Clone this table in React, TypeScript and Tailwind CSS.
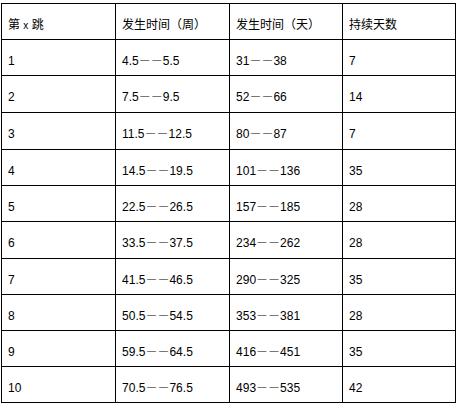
import React from 'react';

// header + 10 rows of leap data
const header = ['第 x 跳', '发生时间（周）', '发生时间（天）', '持续天数'];

const rows: [string, string, string, string][] = [
  ['1', '4.5——5.5', '31——38', '7'],
  ['2', '7.5——9.5', '52——66', '14'],
  ['3', '11.5——12.5', '80——87', '7'],
  ['4', '14.5——19.5', '101——136', '35'],
  ['5', '22.5——26.5', '157——185', '28'],
  ['6', '33.5——37.5', '234——262', '28'],
  ['7', '41.5——46.5', '290——325', '35'],
  ['8', '50.5——54.5', '353——381', '28'],
  ['9', '59.5——64.5', '416——451', '35'],
  ['10', '70.5——76.5', '493——535', '42'],
];

// row heights (incl. bottom border) so lines land on the right pixels
const heights = [
  'h-[36px]',
  'h-[36px]',
  'h-[37px]',
  'h-[37px]',
  'h-[36px]',
  'h-[36px]',
  'h-[37px]',
  'h-[36px]',
  'h-[36px]',
  'h-[36px]',
  'h-[36px]',
];

const colWidths = ['w-[114px]', 'w-[114px]', 'w-[113px]', 'w-[113px]'];

// each dash sits in its own 12px box so the pair reads as two strokes
const CellText: React.FC<{ text: string }> = ({ text }) => {
  const chars = Array.from(text);
  return (
    <span>
      {chars.map((ch, i) =>
        ch === '—' ? (
          <span key={i} className="inline-block w-[12px] text-center text-[9px] relative -top-[2px]">
            {ch}
          </span>
        ) : ch === 'x' ? (
          <span key={i} className="text-[10px]">
            {ch}
          </span>
        ) : (
          <span key={i}>{ch}</span>
        )
      )}
    </span>
  );
};

const App: React.FC = () => {
  const all = [header, ...rows];
  return (
    <div className="w-[459px] h-[405px] bg-white pt-[3px] pl-[1px]">
      <div className="w-[455px] border-l border-t border-black font-['Liberation_Sans','Noto_Sans_CJK_SC',sans-serif] text-[12px] text-black">
        {all.map((row, r) => (
          <div key={r} className={`flex ${heights[r]}`}>
            {row.map((cell, c) => (
              <div
                key={c}
                className={`${colWidths[c]} border-r border-b border-black flex items-center pl-[6px] pt-[6px] whitespace-pre`}
              >
                <CellText text={cell} />
              </div>
            ))}
          </div>
        ))}
      </div>
    </div>
  );
};

export default App;
